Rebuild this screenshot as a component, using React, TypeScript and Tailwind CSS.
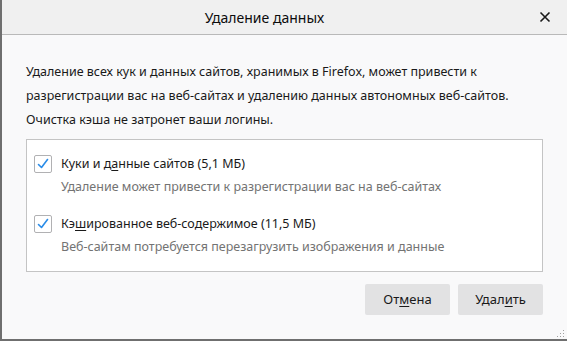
import React from "react";

const font = { fontFamily: '"Noto Sans", "Open Sans", sans-serif' };

function CheckBox() {
  return (
    <span className="flex h-[18px] w-[18px] shrink-0 items-center justify-center rounded-[2px] border border-[#b1b1b3] bg-white">
      <svg width="14" height="14" viewBox="0 0 14 14" fill="none">
        <path d="M2.5 7.5 L5.5 10.5 L11.5 2.5" stroke="#2a8ce8" strokeWidth="1.6" strokeLinecap="round" strokeLinejoin="round" />
      </svg>
    </span>
  );
}

interface OptionProps {
  before: string;
  key_: string;
  after: string;
  description: string;
}

function Option({ before, key_, after, description }: OptionProps) {
  return (
    <div className="flex flex-col">
      <div className="flex items-center gap-[9px]">
        <CheckBox />
        <span className="text-[12.5px] leading-[20px] text-[#1a1a1a]">
          {before}
          <span className="underline underline-offset-2">{key_}</span>
          {after}
        </span>
      </div>
      <div className="pl-[27px] text-[12.5px] leading-[20px] text-[#737373] mt-[3px]">{description}</div>
    </div>
  );
}

export default function App() {
  return (
    <div
      className="flex h-[341px] w-[567px] flex-col border-b-2 border-l-2 border-[#6f6f6f] bg-[#f9f9fa] relative"
      style={font}
    >
      <div className="flex h-[35px] shrink-0 items-center border-b border-[#b9b9b9] bg-[#f0f0f0]">
        <div className="flex-1 pr-[12px] text-center text-[14px] text-[#0c0c0d]">Удаление данных</div>
        <svg className="mr-[16px]" width="12" height="12" viewBox="0 0 12 12">
          <path d="M1.5 1.5 L10.5 10.5 M10.5 1.5 L1.5 10.5" stroke="#1a1a1a" strokeWidth="1.6" />
        </svg>
      </div>

      <div className="flex flex-1 flex-col px-[24px] pt-[25px]">
        <p className="text-[12.5px] leading-[24px] text-[#1a1a1a]">
          Удаление всех кук и данных сайтов, хранимых в Firefox, может привести к
          <br />
          разрегистрации вас на веб-сайтах и удалению данных автономных веб-сайтов.
          <br />
          Очистка кэша не затронет ваши логины.
        </p>

        <div className="mt-[7px] flex h-[133px] flex-col gap-[17px] border border-[#c4c4c4] bg-white pl-[7px] pt-[14px]">
          <Option
            before="Куки и д"
            key_="а"
            after="нные сайтов (5,1 МБ)"
            description="Удаление может привести к разрегистрации вас на веб-сайтах"
          />
          <Option
            before="Кэ"
            key_="ш"
            after="ированное веб-содержимое (11,5 МБ)"
            description="Веб-сайтам потребуется перезагрузить изображения и данные"
          />
        </div>

        <div className="mt-[12px] flex justify-end gap-[8px]">
          <button className="h-[31px] w-[85px] rounded-[2px] bg-[#e2e2e3] text-[13px] text-[#1a1a1a]">
            От<span className="underline underline-offset-2">м</span>ена
          </button>
          <button className="h-[31px] w-[85px] rounded-[2px] bg-[#e2e2e3] text-[13px] text-[#1a1a1a]">
            Удал<span className="underline underline-offset-2">и</span>ть
          </button>
        </div>
      </div>

      <svg className="absolute bottom-[1px] right-[2px]" width="10" height="10" viewBox="0 0 10 10">
        <rect x="8" y="2" width="1" height="1" fill="#a0a0a0" />
        <rect x="5" y="5" width="1" height="1" fill="#a0a0a0" />
        <rect x="8" y="5" width="1" height="1" fill="#a0a0a0" />
        <rect x="2" y="8" width="1" height="1" fill="#a0a0a0" />
        <rect x="5" y="8" width="1" height="1" fill="#a0a0a0" />
        <rect x="8" y="8" width="1" height="1" fill="#a0a0a0" />
      </svg>
    </div>
  );
}
